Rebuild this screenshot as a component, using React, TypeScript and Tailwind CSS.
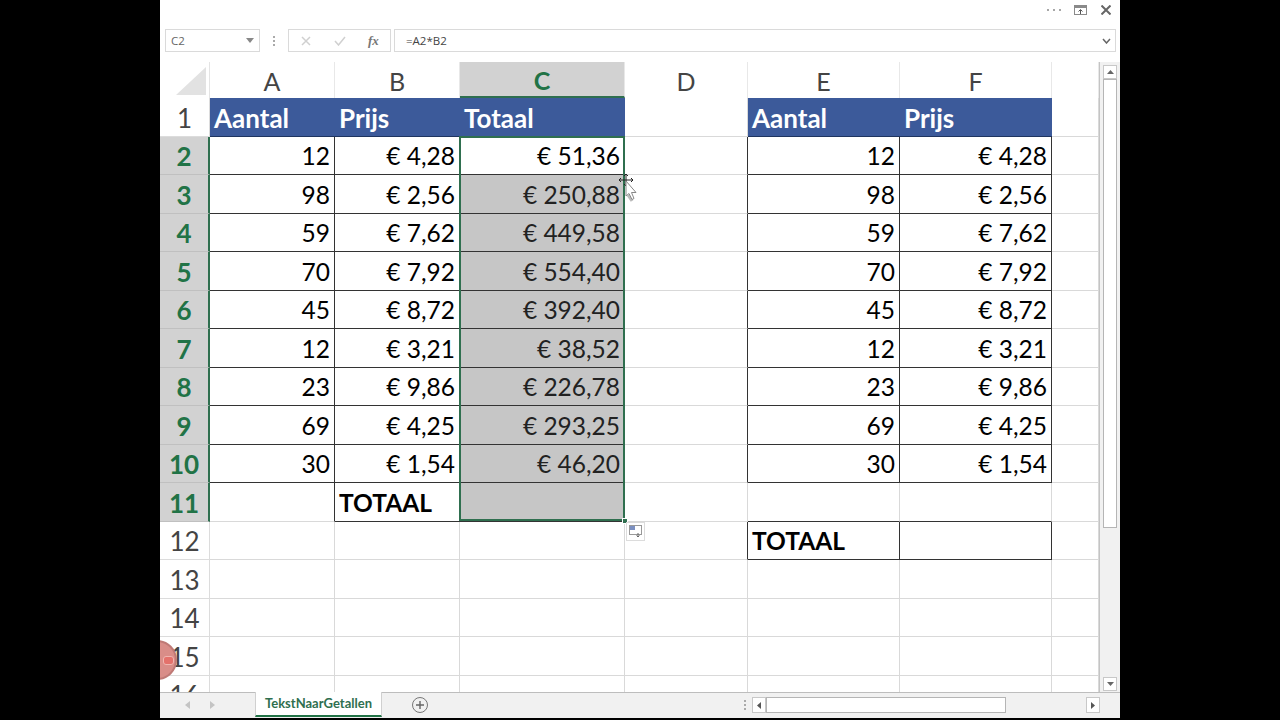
const F = '"Lato","Liberation Sans",sans-serif';
const cols = ['A', 'B', 'C', 'D', 'E', 'F', ''];
const data: [string, string, string][] = [
  ['12', '€ 4,28', '€ 51,36'],
  ['98', '€ 2,56', '€ 250,88'],
  ['59', '€ 7,62', '€ 449,58'],
  ['70', '€ 7,92', '€ 554,40'],
  ['45', '€ 8,72', '€ 392,40'],
  ['12', '€ 3,21', '€ 38,52'],
  ['23', '€ 9,86', '€ 226,78'],
  ['69', '€ 4,25', '€ 293,25'],
  ['30', '€ 1,54', '€ 46,20'],
];
const base = 'h-[38.5px] flex items-center px-1 pt-[2px] text-[24.5px] leading-none border-r border-b';
const grid = 'border-[#d9d9d9]';
const black = 'border-[#333333]';

function RowHead({ n, active }: { n: number; active?: boolean }) {
  return (
    <div className={`h-[38.5px] flex items-center justify-center pt-[2px] text-[26px] leading-none border-b ${active ? 'bg-[#d2d2d2] text-[#217346] font-bold border-b-[#c0c0c0] border-r-2 border-r-[#2f6f4f]' : 'bg-white text-[#444444] border-r border-[#dcdcdc]'}`}>
      {n}
    </div>
  );
}
function Head({ t }: { t: string }) {
  return <div className="h-[38.5px] flex items-center px-1 pt-[3px] text-[26px] leading-none bg-[#3c5a9a] text-white font-bold border-b border-b-[#1f3560]">{t}</div>;
}
function Num({ t, shaded }: { t: string; shaded?: boolean }) {
  return (
    <div className={`${base} justify-end ${black} ${shaded ? 'bg-[#c6c6c6] text-[#222222]' : 'bg-white text-black'}`}>{t}</div>
  );
}
function Blank({ n = 1, cls = grid }: { n?: number; cls?: string }) {
  return (
    <>
      {Array.from({ length: n }).map((_, i) => (
        <div key={i} className={`h-[38.5px] bg-white border-r border-b ${cls}`} />
      ))}
    </>
  );
}
function Dots() {
  return (
    <>
      <span className="w-[2px] h-[2px] bg-[#aaaaaa]" />
      <span className="w-[2px] h-[2px] bg-[#aaaaaa]" />
      <span className="w-[2px] h-[2px] bg-[#aaaaaa]" />
    </>
  );
}

export default function App() {
  return (
    <div className="w-[1280px] h-[720px] bg-black flex justify-center overflow-hidden" style={{ fontFamily: F }}>
      <div className="w-[960px] h-[718px] bg-white flex flex-col">
        {/* title bar */}
        <div className="h-[20px] flex items-center justify-end gap-[12px] pr-[9px] text-[#555555]">
          <svg width="16" height="4" viewBox="0 0 16 4" fill="#8a8a8a"><circle cx="2" cy="2" r="1" /><circle cx="8" cy="2" r="1" /><circle cx="14" cy="2" r="1" /></svg>
          <svg className="mr-[2px]" width="13" height="10" viewBox="0 0 13 10" fill="none" stroke="#8a8a8a"><rect x="0.5" y="0.5" width="12" height="9" /><path d="M1 2h11" strokeWidth="2" /><path d="M6.5 9V5M4.5 6.5L6.5 4.5L8.5 6.5" stroke="#555555" /></svg>
          <svg width="10" height="10" viewBox="0 0 10 10" stroke="#666666" strokeWidth="2"><path d="M0.5 0.5L9.5 9.5M9.5 0.5L0.5 9.5" /></svg>
        </div>
        {/* formula bar */}
        <div className="h-[42px] pt-[9px] pl-[5px] pr-[4px] flex items-start text-[#666666] text-[11.5px]" style={{ fontFamily: '"Open Sans",sans-serif' }}>
          <div className="w-[95px] h-[23px] border border-[#dadada] flex items-center justify-between pl-[5px] pr-[5px]">
            <span>C2</span>
            <svg width="8" height="5" viewBox="0 0 8 5" fill="#888888"><path d="M0 0h8L4 5z" /></svg>
          </div>
          <div className="w-[28px] flex flex-col items-center justify-center gap-[2px] h-[23px]">
            <Dots />
          </div>
          <div className="w-[103px] h-[23px] border border-[#dadada] flex items-center">
            <svg className="ml-[12px]" width="10" height="10" viewBox="0 0 10 10" stroke="#d0d0d0" strokeWidth="1.5"><path d="M1 1L9 9M9 1L1 9" /></svg>
            <svg className="ml-[23px]" width="12" height="10" viewBox="0 0 12 10" fill="none" stroke="#d0d0d0" strokeWidth="1.5"><path d="M1 5L4.5 9L11 1" /></svg>
            <span className="ml-[22px] text-[13px] italic font-semibold text-[#777777]" style={{ fontFamily: '"Liberation Serif",serif' }}>fx</span>
          </div>
          <div className="w-[3px]" />
          <div className="flex-1 h-[23px] border border-[#dadada] flex items-center justify-between pl-[11px] pr-[4px] text-[#444444]">
            <span>=A2*B2</span>
            <svg width="9" height="6" viewBox="0 0 9 6" fill="none" stroke="#666666" strokeWidth="1.5"><path d="M1 1L4.5 5L8 1" /></svg>
          </div>
        </div>
        {/* sheet */}
        <div className="h-[630px] flex">
          <div className="w-[940px] relative overflow-hidden border-r border-[#c4c4c4]">
            <div className="grid grid-cols-[50px_125px_125px_165px_123px_152px_152px_47px]">
              {/* corner + column heads */}
              <div className="h-[36px] flex items-end justify-end pb-[3px] pr-[3px] border-r border-[#e4e4e4]">
                <svg width="30" height="28" viewBox="0 0 30 28" fill="#e2e2e2"><path d="M30 0V28H0z" /></svg>
              </div>
              {cols.map((c, i) => (
                <div key={i} className={`h-[36px] flex items-center justify-center text-[25px] pt-[3px] border-r border-[#e8e8e8] ${c === 'C' ? 'bg-[#d2d2d2] text-[#217346] font-bold border-b-2 border-b-[#2f6f4f]' : 'text-[#444444] font-normal'}`}>
                  {c}
                </div>
              ))}
              {/* row 1 */}
              <RowHead n={1} />
              <Head t="Aantal" /><Head t="Prijs" /><Head t="Totaal" /><Blank />
              <Head t="Aantal" /><Head t="Prijs" /><Blank />
              {/* rows 2-10 */}
              {data.map((r, i) => (
                <div key={i} className="contents">
                  <RowHead n={i + 2} active />
                  <Num t={r[0]} /><Num t={r[1]} /><Num t={r[2]} shaded={i > 0} />
                  <Blank cls="border-b-[#d9d9d9] border-r-[#333333]" />
                  <Num t={r[0]} /><Num t={r[1]} />
                  <Blank />
                </div>
              ))}
              {/* row 11 */}
              <RowHead n={11} active />
              <Blank cls="border-r-[#333333] border-b-[#d9d9d9]" />
              <div className={`${base} ${black} font-bold text-black`}>TOTAAL</div>
              <div className={`${base} ${black} bg-[#c6c6c6]`} />
              <Blank />
              <Blank n={2} cls="border-r-[#d9d9d9] border-b-[#333333]" />
              <Blank />
              {/* row 12 */}
              <RowHead n={12} />
              <Blank n={3} />
              <Blank cls="border-b-[#d9d9d9] border-r-[#333333]" />
              <div className={`${base} ${black} font-bold text-black`}>TOTAAL</div>
              <Blank cls={black} />
              <Blank />
              {/* rows 13-16 */}
              {[13, 14, 15, 16].map((n) => (
                <div key={n} className="contents">
                  <RowHead n={n} />
                  <Blank n={7} />
                </div>
              ))}
            </div>
            {/* selection border */}
            <div className="absolute left-[299px] top-[74px] w-[166px] h-[385px] border-2 border-[#2f6f4f]" />
            <div className="absolute left-[462px] top-[456px] w-[6px] h-[6px] bg-[#2f6f4f] border border-white" />
            {/* quick analysis */}
            <div className="absolute left-[466px] top-[460px] w-[19px] h-[19px] bg-white border border-[#dcdcdc] flex items-center justify-center">
              <svg width="13" height="13" viewBox="0 0 13 13" fill="none"><rect x="0.5" y="0.5" width="12" height="9" stroke="#999999" /><rect x="1" y="1" width="5" height="4" fill="#7b8fc0" /><path d="M9 8v4M7.5 10.5L9 12L10.5 10.5" stroke="#666666" /></svg>
            </div>
            {/* cursor */}
            <svg className="absolute left-[457px] top-[112px]" width="22" height="28" viewBox="0 0 22 28">
              <path d="M11 21L15 27" stroke="#bbbbbb" strokeWidth="3" />
              <path d="M2 6H16M9 0V12M4 4L2 6L4 8M14 4L16 6L14 8M7 2L9 0L11 2M7 10L9 12L11 10" stroke="#222222" strokeWidth="1" fill="none" />
              <path d="M9 7V22L12 19.5L15 25.5L17 24.5L14.5 18.5L19 18.5Z" fill="#ffffff" stroke="#888888" />
            </svg>
            {/* recording dot */}
            <div className="absolute left-[-23px] top-[578px] w-[40px] h-[40px] rounded-full bg-[#d98d88] flex items-center justify-center border-2 border-[#bf7a76]">
              <div className="ml-[22px] w-[11px] h-[9px] rounded-[3px] bg-[#e4716b] border border-[#f0b5b0]" />
            </div>
          </div>
          {/* vertical scrollbar */}
          <div className="flex-1 flex flex-col items-center pt-[3px] pb-[1px] bg-[#f1f1f1]">
            <div className="w-[14px] h-[14px] bg-white border border-[#c8c8c8] flex items-center justify-center">
              <svg width="7" height="4" viewBox="0 0 7 4" fill="#666666"><path d="M3.5 0L7 4H0z" /></svg>
            </div>
            <div className="w-[14px] h-[449px] bg-white border border-[#b5b5b5]" />
            <div className="flex-1" />
            <div className="w-[14px] h-[14px] bg-white border border-[#c8c8c8] flex items-center justify-center">
              <svg width="7" height="4" viewBox="0 0 7 4" fill="#666666"><path d="M3.5 4L7 0H0z" /></svg>
            </div>
          </div>
        </div>
        {/* tab bar */}
        <div className="flex-1 flex items-start bg-[#f1f1f1] border-t border-[#bdbdbd]">
          <div className="w-[95px] h-[24px] flex items-center gap-[20px] pl-[25px]">
            <svg width="5" height="8" viewBox="0 0 5 8" fill="#c4c4c4"><path d="M5 0V8L0 4z" /></svg>
            <svg width="5" height="8" viewBox="0 0 5 8" fill="#c4c4c4"><path d="M0 0V8L5 4z" /></svg>
          </div>
          <div className="mt-[-1px] w-[127px] h-[25px] bg-white border-b-2 border-[#217346] border-l border-r border-l-[#d0d0d0] border-r-[#d0d0d0] flex items-center justify-center text-[13px] font-bold text-[#2f6f4f]">
            TekstNaarGetallen
          </div>
          <div className="w-[30px]" />
          <div className="w-[16px] h-[16px] mt-[4px] rounded-full border border-[#777777] flex items-center justify-center">
            <svg width="8" height="8" viewBox="0 0 8 8" stroke="#666666" strokeWidth="1.4"><path d="M4 0V8M0 4H8" /></svg>
          </div>
          <div className="flex-1" />
          <div className="w-[14px] h-[24px] flex flex-col items-center justify-center gap-[2px]">
            <Dots />
          </div>
          <div className="w-[348px] h-[16px] mt-[4px] mr-[20px] flex">
            <div className="w-[14px] bg-white border border-[#c8c8c8] flex items-center justify-center">
              <svg width="4" height="7" viewBox="0 0 4 7" fill="#555555"><path d="M4 0V7L0 3.5z" /></svg>
            </div>
            <div className="w-[240px] bg-white border border-[#b5b5b5]" />
            <div className="flex-1" />
            <div className="w-[14px] bg-white border border-[#c8c8c8] flex items-center justify-center">
              <svg width="4" height="7" viewBox="0 0 4 7" fill="#555555"><path d="M0 0V7L4 3.5z" /></svg>
            </div>
          </div>
        </div>
      </div>
    </div>
  );
}
